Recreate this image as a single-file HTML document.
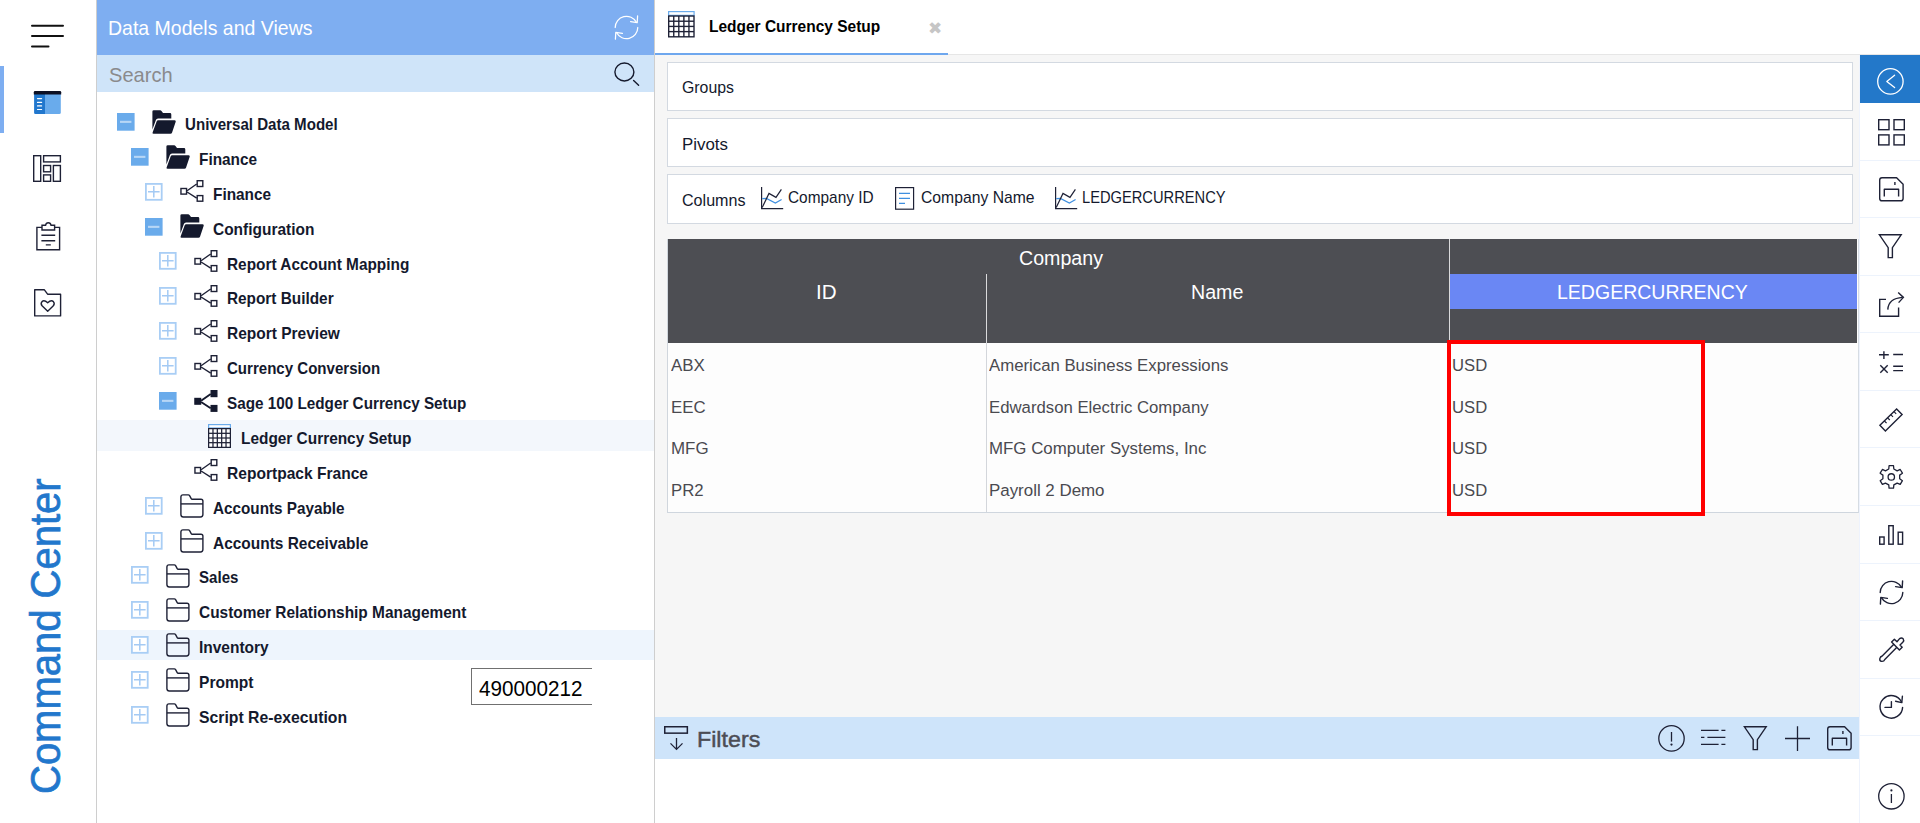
<!DOCTYPE html>
<html lang="en"><head><meta charset="utf-8"><title>Command Center - Ledger Currency Setup</title>
<style>
*{box-sizing:border-box}
html,body{margin:0;padding:0}
body{width:1920px;height:823px;overflow:hidden;background:#fff;position:relative;
 font-family:"Liberation Sans",sans-serif;color:#14192d}
.abs,.t,svg.i{position:absolute}
.t{white-space:nowrap;line-height:1;transform-origin:0 0;display:block}
.b{font-weight:bold}
svg.i{overflow:visible}
#rail{position:absolute;left:0;top:0;width:97px;height:823px;background:#fff;border-right:1px solid #cecece}
#panel{position:absolute;left:97px;top:0;width:558px;height:823px;background:#fff;border-right:1px solid #cecece}
#phead{position:absolute;left:0;top:0;width:557px;height:55px;background:#7eaef1}
#psearch{position:absolute;left:0;top:55px;width:557px;height:36.6px;background:#cfe4f9}
#tree{position:absolute;left:0;top:0;width:557px;height:823px;list-style:none;margin:0;padding:0}
#tree li{position:absolute;left:0;width:557px;margin:0;padding:0}
#tree li.sel{background:#f3f7fc}
#tree li.hov{background:#eef5fd}
#main{position:absolute;left:655px;top:0;width:1205px;height:823px;background:#fff}
#tabs{position:absolute;left:0;top:0;width:1265px;height:55px;background:#fff;border-bottom:1px solid #e6e6e6}
#tab{position:absolute;left:0;top:0;width:293px;height:55px;border-bottom:2px solid #6ea7ee}
#content{position:absolute;left:0;top:55px;width:1205px;height:662px;background:#f6f6f6}
.box{position:absolute;left:12px;width:1186px;height:49px;background:#fff;border:1px solid #d3d9e1}
#grid{position:absolute;left:12px;top:184px;width:1192px;height:274px;background:#fdfdfd;border-left:1px solid #d0d6dd;border-bottom:1px solid #cfd6de;border-right:1px solid #d6dce3}
#grid table{position:absolute;left:0;top:0;border-collapse:separate;border-spacing:0;table-layout:fixed;width:1189px}
#grid th,#grid td{padding:0;margin:0;font-weight:normal;position:relative;vertical-align:top;text-align:left}
#grid thead th{background:#4d4e53;color:#fff}
#filterbar{position:absolute;left:0;top:717px;width:1204px;height:41.8px;background:#cee4fa}
#tools{position:absolute;left:1859px;top:55px;width:61px;height:768px;background:#fff;border-left:1px solid #eef3fd;margin:0;padding:0;list-style:none}
#tools li{position:absolute;left:0;width:60px;height:57.5px;border-bottom:1px solid #edf3fc}
#tip{position:absolute;left:374px;top:668px;width:121px;height:37px;background:#fff;border:1px solid #707070;border-right:0}
#redbox{position:absolute;left:1447px;top:340px;width:258px;height:176px;border:4px solid #ff0000}
</style></head><body>
<nav id="rail">
<div class="abs" style="left:0;top:66px;width:4px;height:67px;background:#7eaef1"></div>
<svg class="i" style="left:28px;top:20px" width="40" height="32" viewBox="0 0 40 32" ><path fill="none" stroke="#111" stroke-width="2" stroke-linecap="round" d="M4,5.75H35M4,16H35M4,26.4H20.5"/></svg>
<svg class="i" style="left:34px;top:91px" width="27" height="23" viewBox="0 0 27 23" ><path fill="#69abec" d="M0.2,2H26.8V21.5Q26.8,23 25.3,23H1.7Q0.2,23 0.2,21.5Z"/><path fill="#2177cd" d="M0.2,2H11V23H1.7Q0.2,23 0.2,21.5Z"/><path fill="#0d1024" d="M-0.2,1.2Q-0.2,0.1 1,0.1H26Q27.2,0.1 27.2,1.2V3.5H-0.2Z"/><path fill="none" stroke="#fff" stroke-width="1.2" stroke-linecap="round" d="M3.5,7.6H7.6M3.5,11.4H7.6M3.5,14.9H7.6M3.5,18.5H7.6"/></svg>
<svg class="i" style="left:33.4px;top:155px" width="28.2" height="27" viewBox="0 0 28.2 27" ><g fill="none" stroke="#1e2136" stroke-width="1.4"><rect x="0.7" y="0.7" width="7" height="25.6"/><rect x="10.6" y="0.7" width="16.8" height="6.2"/><rect x="10.6" y="10.5" width="7" height="6.3"/><rect x="10.6" y="19.9" width="7" height="6.4"/><rect x="20.4" y="10.5" width="7" height="15.8"/></g></svg>
<svg class="i" style="left:35.5px;top:221.6px" width="24.5" height="28.6" viewBox="0 0 24.5 28.6" ><g fill="none" stroke="#1e2136" stroke-width="1.4"><path d="M6,5.4H0.9V27.8H23.6V5.4H18.6"/><path d="M6,8H18.6V3.2H15Q14.6,0.7 12.3,0.7Q10,0.7 9.6,3.2H6Z"/><path d="M5.4,13.2H19.2M5.4,18.8H19.2M9.8,22.9H14.8"/></g></svg>
<svg class="i" style="left:33.75px;top:289px" width="27.3" height="27.6" viewBox="0 0 27.3 27.6" ><g fill="none" stroke="#1e2136" stroke-width="1.4" stroke-linejoin="round"><path d="M0.7,0.7H10.2L13.6,5.2H26.6V26.9H0.7Z"/><path d="M13.7,22.3L8.3,17Q6.2,14.6 8,12.6Q10.3,10.6 13.7,13.8Q17.1,10.6 19.4,12.6Q21.2,14.6 19.1,17Z"/></g></svg>
<div class="t" style="left:60.3px;top:794.4px;font-size:41.8px;color:#2277cc;transform-origin:0 0;transform:rotate(-90deg) scale(0.9567,1) translateY(-35.00px);-webkit-text-stroke:0.7px #2277cc">Command Center</div>
</nav>
<aside id="panel">
<header id="phead">
<span class="t" style="left:11.2px;top:18.2px;font-size:20.8px;transform:scale(0.9375,1.0000);color:#fff;">Data Models and Views</span>
<svg class="i" style="left:517px;top:15.2px" width="25" height="25" viewBox="0 0 25 25" ><g fill="none" stroke="#fff" stroke-width="1.25" stroke-linecap="round" stroke-linejoin="round"><path d="M1.2,12.5A11.3,11.3 0 0 1 22.4,7.2"/><path d="M23.6,0.9L23.2,7.6L16.6,6.6"/><path d="M23.8,12.5A11.3,11.3 0 0 1 2.6,17.8"/><path d="M1.4,24.1L1.8,17.4L8.4,18.4"/></g></svg>
</header>
<div id="psearch">
<span class="t" style="left:12.4px;top:9.2px;font-size:21px;transform:scale(0.9558,1.0000);color:#8a8a8c;">Search</span>
<svg class="i" style="left:516.5px;top:6.5px" width="27" height="26" viewBox="0 0 27 26" ><g fill="none" stroke="#14192d" stroke-width="1.4" stroke-linecap="round"><ellipse cx="10.4" cy="10" rx="9.5" ry="9"/><path d="M19.6,18.6L24.6,23.3"/></g></svg>
</div>
<ul id="tree">
<li style="top:106px;height:31px"><svg class="i" style="left:20.1px;top:6.9px" width="18" height="18" viewBox="0 0 18 18" ><rect x="0" y="0" width="17.6" height="17.7" fill="#6aabeb"/><rect x="3" y="7.8" width="11.4" height="2.1" fill="#b7d6f6"/></svg><svg class="i" style="left:54.9px;top:3.7px" width="24" height="24" viewBox="0 0 24 24" ><path fill="#14192d" d="M0.4,1.6Q0.4,0.2 1.8,0.2L8.2,0.2Q9,0.2 9.5,0.9L10.6,2.6Q11,3.1 11.7,3.1L18,3.1Q19.3,3.1 19.3,4.4L19.3,8.4L6,8.4Q4.4,8.4 3.9,9.9L0.4,19.6Z"/><path fill="#14192d" d="M6.2,10.3L22.6,10.3Q24.2,10.3 23.7,11.8L20.1,22.6Q19.7,23.8 18.4,23.8L1.6,23.8Q0.1,23.8 0.6,22.4L4.6,11.5Q5,10.3 6.2,10.3Z"/></svg><span class="t b" style="left:87.55px;top:10px;font-size:16.5px;transform:scale(0.9150,1.0000);color:#14192d;">Universal Data Model</span></li>
<li style="top:141px;height:31px"><svg class="i" style="left:34.1px;top:6.78px" width="18" height="18" viewBox="0 0 18 18" ><rect x="0" y="0" width="17.6" height="17.7" fill="#6aabeb"/><rect x="3" y="7.8" width="11.4" height="2.1" fill="#b7d6f6"/></svg><svg class="i" style="left:68.9px;top:3.59px" width="24" height="24" viewBox="0 0 24 24" ><path fill="#14192d" d="M0.4,1.6Q0.4,0.2 1.8,0.2L8.2,0.2Q9,0.2 9.5,0.9L10.6,2.6Q11,3.1 11.7,3.1L18,3.1Q19.3,3.1 19.3,4.4L19.3,8.4L6,8.4Q4.4,8.4 3.9,9.9L0.4,19.6Z"/><path fill="#14192d" d="M6.2,10.3L22.6,10.3Q24.2,10.3 23.7,11.8L20.1,22.6Q19.7,23.8 18.4,23.8L1.6,23.8Q0.1,23.8 0.6,22.4L4.6,11.5Q5,10.3 6.2,10.3Z"/></svg><span class="t b" style="left:101.55px;top:10px;font-size:16.5px;transform:scale(0.9318,1.0000);color:#14192d;">Finance</span></li>
<li style="top:176px;height:31px"><svg class="i" style="left:48.1px;top:6.67px" width="18" height="18" viewBox="0 0 18 18" ><rect x="0.9" y="0.9" width="15.8" height="15.9" fill="#fff" stroke="#a9cef5" stroke-width="1.8"/><path fill="none" stroke="#a4caf4" stroke-width="1.5" d="M3,8.8H14.6M8.8,3V14.6"/></svg><svg class="i" style="left:82.6px;top:4.37px" width="24" height="22" viewBox="0 0 24 22" ><path fill="none" stroke="#1e2136" stroke-width="1.4" d="M7.1,10.7L16.7,4M7.1,12L16.7,18.2"/><rect x="0.95" y="8.5" width="5.6" height="5.6" fill="#fff" stroke="#1e2136" stroke-width="1.4"/><rect x="17.2" y="0.7" width="5.6" height="5.8" fill="#fff" stroke="#1e2136" stroke-width="1.4"/><rect x="17.2" y="15.6" width="5.6" height="5.6" fill="#fff" stroke="#1e2136" stroke-width="1.4"/></svg><span class="t b" style="left:115.55px;top:10px;font-size:16.5px;transform:scale(0.9318,1.0000);color:#14192d;">Finance</span></li>
<li style="top:211px;height:31px"><svg class="i" style="left:48.1px;top:6.56px" width="18" height="18" viewBox="0 0 18 18" ><rect x="0" y="0" width="17.6" height="17.7" fill="#6aabeb"/><rect x="3" y="7.8" width="11.4" height="2.1" fill="#b7d6f6"/></svg><svg class="i" style="left:82.9px;top:3.36px" width="24" height="24" viewBox="0 0 24 24" ><path fill="#14192d" d="M0.4,1.6Q0.4,0.2 1.8,0.2L8.2,0.2Q9,0.2 9.5,0.9L10.6,2.6Q11,3.1 11.7,3.1L18,3.1Q19.3,3.1 19.3,4.4L19.3,8.4L6,8.4Q4.4,8.4 3.9,9.9L0.4,19.6Z"/><path fill="#14192d" d="M6.2,10.3L22.6,10.3Q24.2,10.3 23.7,11.8L20.1,22.6Q19.7,23.8 18.4,23.8L1.6,23.8Q0.1,23.8 0.6,22.4L4.6,11.5Q5,10.3 6.2,10.3Z"/></svg><span class="t b" style="left:115.55px;top:10px;font-size:16.5px;transform:scale(0.9376,1.0000);color:#14192d;">Configuration</span></li>
<li style="top:246px;height:31px"><svg class="i" style="left:62.1px;top:6.44px" width="18" height="18" viewBox="0 0 18 18" ><rect x="0.9" y="0.9" width="15.8" height="15.9" fill="#fff" stroke="#a9cef5" stroke-width="1.8"/><path fill="none" stroke="#a4caf4" stroke-width="1.5" d="M3,8.8H14.6M8.8,3V14.6"/></svg><svg class="i" style="left:96.6px;top:4.14px" width="24" height="22" viewBox="0 0 24 22" ><path fill="none" stroke="#1e2136" stroke-width="1.4" d="M7.1,10.7L16.7,4M7.1,12L16.7,18.2"/><rect x="0.95" y="8.5" width="5.6" height="5.6" fill="#fff" stroke="#1e2136" stroke-width="1.4"/><rect x="17.2" y="0.7" width="5.6" height="5.8" fill="#fff" stroke="#1e2136" stroke-width="1.4"/><rect x="17.2" y="15.6" width="5.6" height="5.6" fill="#fff" stroke="#1e2136" stroke-width="1.4"/></svg><span class="t b" style="left:129.55px;top:10px;font-size:16.5px;transform:scale(0.9323,1.0000);color:#14192d;">Report Account Mapping</span></li>
<li style="top:281px;height:31px"><svg class="i" style="left:62.1px;top:6.32px" width="18" height="18" viewBox="0 0 18 18" ><rect x="0.9" y="0.9" width="15.8" height="15.9" fill="#fff" stroke="#a9cef5" stroke-width="1.8"/><path fill="none" stroke="#a4caf4" stroke-width="1.5" d="M3,8.8H14.6M8.8,3V14.6"/></svg><svg class="i" style="left:96.6px;top:4.02px" width="24" height="22" viewBox="0 0 24 22" ><path fill="none" stroke="#1e2136" stroke-width="1.4" d="M7.1,10.7L16.7,4M7.1,12L16.7,18.2"/><rect x="0.95" y="8.5" width="5.6" height="5.6" fill="#fff" stroke="#1e2136" stroke-width="1.4"/><rect x="17.2" y="0.7" width="5.6" height="5.8" fill="#fff" stroke="#1e2136" stroke-width="1.4"/><rect x="17.2" y="15.6" width="5.6" height="5.6" fill="#fff" stroke="#1e2136" stroke-width="1.4"/></svg><span class="t b" style="left:129.55px;top:9px;font-size:16.5px;transform:scale(0.9303,1.0000);color:#14192d;">Report Builder</span></li>
<li style="top:316px;height:31px"><svg class="i" style="left:62.1px;top:6.21px" width="18" height="18" viewBox="0 0 18 18" ><rect x="0.9" y="0.9" width="15.8" height="15.9" fill="#fff" stroke="#a9cef5" stroke-width="1.8"/><path fill="none" stroke="#a4caf4" stroke-width="1.5" d="M3,8.8H14.6M8.8,3V14.6"/></svg><svg class="i" style="left:96.6px;top:3.91px" width="24" height="22" viewBox="0 0 24 22" ><path fill="none" stroke="#1e2136" stroke-width="1.4" d="M7.1,10.7L16.7,4M7.1,12L16.7,18.2"/><rect x="0.95" y="8.5" width="5.6" height="5.6" fill="#fff" stroke="#1e2136" stroke-width="1.4"/><rect x="17.2" y="0.7" width="5.6" height="5.8" fill="#fff" stroke="#1e2136" stroke-width="1.4"/><rect x="17.2" y="15.6" width="5.6" height="5.6" fill="#fff" stroke="#1e2136" stroke-width="1.4"/></svg><span class="t b" style="left:129.55px;top:9px;font-size:16.5px;transform:scale(0.9390,1.0000);color:#14192d;">Report Preview</span></li>
<li style="top:351px;height:31px"><svg class="i" style="left:62.1px;top:6.1px" width="18" height="18" viewBox="0 0 18 18" ><rect x="0.9" y="0.9" width="15.8" height="15.9" fill="#fff" stroke="#a9cef5" stroke-width="1.8"/><path fill="none" stroke="#a4caf4" stroke-width="1.5" d="M3,8.8H14.6M8.8,3V14.6"/></svg><svg class="i" style="left:96.6px;top:3.8px" width="24" height="22" viewBox="0 0 24 22" ><path fill="none" stroke="#1e2136" stroke-width="1.4" d="M7.1,10.7L16.7,4M7.1,12L16.7,18.2"/><rect x="0.95" y="8.5" width="5.6" height="5.6" fill="#fff" stroke="#1e2136" stroke-width="1.4"/><rect x="17.2" y="0.7" width="5.6" height="5.8" fill="#fff" stroke="#1e2136" stroke-width="1.4"/><rect x="17.2" y="15.6" width="5.6" height="5.6" fill="#fff" stroke="#1e2136" stroke-width="1.4"/></svg><span class="t b" style="left:129.55px;top:9px;font-size:16.5px;transform:scale(0.9124,1.0000);color:#14192d;">Currency Conversion</span></li>
<li style="top:386px;height:31px"><svg class="i" style="left:62.1px;top:5.98px" width="18" height="18" viewBox="0 0 18 18" ><rect x="0" y="0" width="17.6" height="17.7" fill="#6aabeb"/><rect x="3" y="7.8" width="11.4" height="2.1" fill="#b7d6f6"/></svg><svg class="i" style="left:96.6px;top:3.78px" width="24" height="22" viewBox="0 0 24 22" ><path fill="none" stroke="#14192d" stroke-width="1.9" d="M7.1,10.7L16.7,4M7.1,12L16.7,18.2"/><rect x="0.95" y="8.5" width="5.6" height="5.6" fill="#14192d" stroke="#14192d" stroke-width="1.4"/><rect x="17.2" y="0.7" width="5.6" height="5.8" fill="#14192d" stroke="#14192d" stroke-width="1.4"/><rect x="17.2" y="15.6" width="5.6" height="5.6" fill="#14192d" stroke="#14192d" stroke-width="1.4"/></svg><span class="t b" style="left:129.55px;top:9px;font-size:16.5px;transform:scale(0.9254,1.0000);color:#14192d;">Sage 100 Ledger Currency Setup</span></li>
<li style="top:420px;height:31px" class="sel"><svg class="i" style="left:111.1px;top:4.06px" width="23" height="24" viewBox="0 0 23 24" ><rect x="0.6" y="0.6" width="21.8" height="3.4" fill="#fff" stroke="#6aabeb" stroke-width="1.2"/><rect x="0" y="4" width="23" height="20" fill="#1e2136"/><rect x="1.25" y="5.25" width="3.1" height="3.44" fill="#fff"/><rect x="5.6" y="5.25" width="3.1" height="3.44" fill="#fff"/><rect x="9.95" y="5.25" width="3.1" height="3.44" fill="#fff"/><rect x="14.3" y="5.25" width="3.1" height="3.44" fill="#fff"/><rect x="18.65" y="5.25" width="3.1" height="3.44" fill="#fff"/><rect x="1.25" y="9.94" width="3.1" height="3.44" fill="#fff"/><rect x="5.6" y="9.94" width="3.1" height="3.44" fill="#fff"/><rect x="9.95" y="9.94" width="3.1" height="3.44" fill="#fff"/><rect x="14.3" y="9.94" width="3.1" height="3.44" fill="#fff"/><rect x="18.65" y="9.94" width="3.1" height="3.44" fill="#fff"/><rect x="1.25" y="14.62" width="3.1" height="3.44" fill="#fff"/><rect x="5.6" y="14.62" width="3.1" height="3.44" fill="#fff"/><rect x="9.95" y="14.62" width="3.1" height="3.44" fill="#fff"/><rect x="14.3" y="14.62" width="3.1" height="3.44" fill="#fff"/><rect x="18.65" y="14.62" width="3.1" height="3.44" fill="#fff"/><rect x="1.25" y="19.31" width="3.1" height="3.44" fill="#fff"/><rect x="5.6" y="19.31" width="3.1" height="3.44" fill="#fff"/><rect x="9.95" y="19.31" width="3.1" height="3.44" fill="#fff"/><rect x="14.3" y="19.31" width="3.1" height="3.44" fill="#fff"/><rect x="18.65" y="19.31" width="3.1" height="3.44" fill="#fff"/></svg><span class="t b" style="left:143.55px;top:10px;font-size:16.5px;transform:scale(0.9333,1.0000);color:#14192d;">Ledger Currency Setup</span></li>
<li style="top:455px;height:31px"><svg class="i" style="left:96.6px;top:4.45px" width="24" height="22" viewBox="0 0 24 22" ><path fill="none" stroke="#1e2136" stroke-width="1.4" d="M7.1,10.7L16.7,4M7.1,12L16.7,18.2"/><rect x="0.95" y="8.5" width="5.6" height="5.6" fill="#fff" stroke="#1e2136" stroke-width="1.4"/><rect x="17.2" y="0.7" width="5.6" height="5.8" fill="#fff" stroke="#1e2136" stroke-width="1.4"/><rect x="17.2" y="15.6" width="5.6" height="5.6" fill="#fff" stroke="#1e2136" stroke-width="1.4"/></svg><span class="t b" style="left:129.55px;top:10px;font-size:16.5px;transform:scale(0.9433,1.0000);color:#14192d;">Reportpack France</span></li>
<li style="top:490px;height:31px"><svg class="i" style="left:48.1px;top:6.63px" width="18" height="18" viewBox="0 0 18 18" ><rect x="0.9" y="0.9" width="15.8" height="15.9" fill="#fff" stroke="#a9cef5" stroke-width="1.8"/><path fill="none" stroke="#a4caf4" stroke-width="1.5" d="M3,8.8H14.6M8.8,3V14.6"/></svg><svg class="i" style="left:83px;top:3.74px" width="24" height="24" viewBox="0 0 24 24" ><path fill="none" stroke="#1e2136" stroke-width="1.4" stroke-linejoin="round" d="M0.9,3Q0.9,0.9 3,0.9L8.4,0.9Q9.1,0.9 9.6,1.7L11.2,4.6Q11.5,5.2 12.3,5.2L21,5.2Q22.9,5.2 22.9,7.1L22.9,20.6Q22.9,23 20.5,23L3.3,23Q0.9,23 0.9,20.6Z"/><path fill="none" stroke="#1e2136" stroke-width="1.4" d="M0.9,9.9L22.9,9.9"/></svg><span class="t b" style="left:115.55px;top:10px;font-size:16.5px;transform:scale(0.9258,1.0000);color:#14192d;">Accounts Payable</span></li>
<li style="top:525px;height:31px"><svg class="i" style="left:48.1px;top:6.52px" width="18" height="18" viewBox="0 0 18 18" ><rect x="0.9" y="0.9" width="15.8" height="15.9" fill="#fff" stroke="#a9cef5" stroke-width="1.8"/><path fill="none" stroke="#a4caf4" stroke-width="1.5" d="M3,8.8H14.6M8.8,3V14.6"/></svg><svg class="i" style="left:83px;top:3.62px" width="24" height="24" viewBox="0 0 24 24" ><path fill="none" stroke="#1e2136" stroke-width="1.4" stroke-linejoin="round" d="M0.9,3Q0.9,0.9 3,0.9L8.4,0.9Q9.1,0.9 9.6,1.7L11.2,4.6Q11.5,5.2 12.3,5.2L21,5.2Q22.9,5.2 22.9,7.1L22.9,20.6Q22.9,23 20.5,23L3.3,23Q0.9,23 0.9,20.6Z"/><path fill="none" stroke="#1e2136" stroke-width="1.4" d="M0.9,9.9L22.9,9.9"/></svg><span class="t b" style="left:115.55px;top:10px;font-size:16.5px;transform:scale(0.9362,1.0000);color:#14192d;">Accounts Receivable</span></li>
<li style="top:560px;height:31px"><svg class="i" style="left:34.1px;top:6.4px" width="18" height="18" viewBox="0 0 18 18" ><rect x="0.9" y="0.9" width="15.8" height="15.9" fill="#fff" stroke="#a9cef5" stroke-width="1.8"/><path fill="none" stroke="#a4caf4" stroke-width="1.5" d="M3,8.8H14.6M8.8,3V14.6"/></svg><svg class="i" style="left:69px;top:3.5px" width="24" height="24" viewBox="0 0 24 24" ><path fill="none" stroke="#1e2136" stroke-width="1.4" stroke-linejoin="round" d="M0.9,3Q0.9,0.9 3,0.9L8.4,0.9Q9.1,0.9 9.6,1.7L11.2,4.6Q11.5,5.2 12.3,5.2L21,5.2Q22.9,5.2 22.9,7.1L22.9,20.6Q22.9,23 20.5,23L3.3,23Q0.9,23 0.9,20.6Z"/><path fill="none" stroke="#1e2136" stroke-width="1.4" d="M0.9,9.9L22.9,9.9"/></svg><span class="t b" style="left:101.55px;top:9px;font-size:16.5px;transform:scale(0.9137,1.0000);color:#14192d;">Sales</span></li>
<li style="top:595px;height:31px"><svg class="i" style="left:34.1px;top:6.29px" width="18" height="18" viewBox="0 0 18 18" ><rect x="0.9" y="0.9" width="15.8" height="15.9" fill="#fff" stroke="#a9cef5" stroke-width="1.8"/><path fill="none" stroke="#a4caf4" stroke-width="1.5" d="M3,8.8H14.6M8.8,3V14.6"/></svg><svg class="i" style="left:69px;top:3.39px" width="24" height="24" viewBox="0 0 24 24" ><path fill="none" stroke="#1e2136" stroke-width="1.4" stroke-linejoin="round" d="M0.9,3Q0.9,0.9 3,0.9L8.4,0.9Q9.1,0.9 9.6,1.7L11.2,4.6Q11.5,5.2 12.3,5.2L21,5.2Q22.9,5.2 22.9,7.1L22.9,20.6Q22.9,23 20.5,23L3.3,23Q0.9,23 0.9,20.6Z"/><path fill="none" stroke="#1e2136" stroke-width="1.4" d="M0.9,9.9L22.9,9.9"/></svg><span class="t b" style="left:101.55px;top:9px;font-size:16.5px;transform:scale(0.9345,1.0000);color:#14192d;">Customer Relationship Management</span></li>
<li style="top:630px;height:30px" class="hov"><svg class="i" style="left:34.1px;top:6.17px" width="18" height="18" viewBox="0 0 18 18" ><rect x="0.9" y="0.9" width="15.8" height="15.9" fill="#fff" stroke="#a9cef5" stroke-width="1.8"/><path fill="none" stroke="#a4caf4" stroke-width="1.5" d="M3,8.8H14.6M8.8,3V14.6"/></svg><svg class="i" style="left:69px;top:3.27px" width="24" height="24" viewBox="0 0 24 24" ><path fill="none" stroke="#1e2136" stroke-width="1.4" stroke-linejoin="round" d="M0.9,3Q0.9,0.9 3,0.9L8.4,0.9Q9.1,0.9 9.6,1.7L11.2,4.6Q11.5,5.2 12.3,5.2L21,5.2Q22.9,5.2 22.9,7.1L22.9,20.6Q22.9,23 20.5,23L3.3,23Q0.9,23 0.9,20.6Z"/><path fill="none" stroke="#1e2136" stroke-width="1.4" d="M0.9,9.9L22.9,9.9"/></svg><span class="t b" style="left:101.55px;top:9px;font-size:16.5px;transform:scale(0.9385,1.0000);color:#14192d;">Inventory</span></li>
<li style="top:665px;height:31px"><svg class="i" style="left:34.1px;top:6.06px" width="18" height="18" viewBox="0 0 18 18" ><rect x="0.9" y="0.9" width="15.8" height="15.9" fill="#fff" stroke="#a9cef5" stroke-width="1.8"/><path fill="none" stroke="#a4caf4" stroke-width="1.5" d="M3,8.8H14.6M8.8,3V14.6"/></svg><svg class="i" style="left:69px;top:3.16px" width="24" height="24" viewBox="0 0 24 24" ><path fill="none" stroke="#1e2136" stroke-width="1.4" stroke-linejoin="round" d="M0.9,3Q0.9,0.9 3,0.9L8.4,0.9Q9.1,0.9 9.6,1.7L11.2,4.6Q11.5,5.2 12.3,5.2L21,5.2Q22.9,5.2 22.9,7.1L22.9,20.6Q22.9,23 20.5,23L3.3,23Q0.9,23 0.9,20.6Z"/><path fill="none" stroke="#1e2136" stroke-width="1.4" d="M0.9,9.9L22.9,9.9"/></svg><span class="t b" style="left:101.55px;top:9px;font-size:16.5px;transform:scale(0.9437,1.0000);color:#14192d;">Prompt</span></li>
<li style="top:700px;height:31px"><svg class="i" style="left:34.1px;top:5.94px" width="18" height="18" viewBox="0 0 18 18" ><rect x="0.9" y="0.9" width="15.8" height="15.9" fill="#fff" stroke="#a9cef5" stroke-width="1.8"/><path fill="none" stroke="#a4caf4" stroke-width="1.5" d="M3,8.8H14.6M8.8,3V14.6"/></svg><svg class="i" style="left:69px;top:3.04px" width="24" height="24" viewBox="0 0 24 24" ><path fill="none" stroke="#1e2136" stroke-width="1.4" stroke-linejoin="round" d="M0.9,3Q0.9,0.9 3,0.9L8.4,0.9Q9.1,0.9 9.6,1.7L11.2,4.6Q11.5,5.2 12.3,5.2L21,5.2Q22.9,5.2 22.9,7.1L22.9,20.6Q22.9,23 20.5,23L3.3,23Q0.9,23 0.9,20.6Z"/><path fill="none" stroke="#1e2136" stroke-width="1.4" d="M0.9,9.9L22.9,9.9"/></svg><span class="t b" style="left:101.55px;top:9px;font-size:16.5px;transform:scale(0.9557,1.0000);color:#14192d;">Script Re-execution</span></li>
</ul>
<div id="tip"><span class="t" style="left:7.2px;top:8.9px;font-size:21.6px;transform:scale(0.9573,1.0000);color:#000;">490000212</span></div>
</aside>
<main id="main">
<div id="tabs"><div id="tab">
<svg class="i" style="left:13.1px;top:11.3px" width="26.7" height="26.5" viewBox="0 0 26.7 26.5" ><rect x="0.6" y="0.6" width="25.5" height="3.74" fill="#fff" stroke="#6aabeb" stroke-width="1.2"/><rect x="0" y="4.34" width="26.7" height="22.16" fill="#1e2136"/><rect x="1.38" y="5.71" width="3.69" height="3.82" fill="#fff"/><rect x="6.44" y="5.71" width="3.69" height="3.82" fill="#fff"/><rect x="11.5" y="5.71" width="3.69" height="3.82" fill="#fff"/><rect x="16.57" y="5.71" width="3.69" height="3.82" fill="#fff"/><rect x="21.63" y="5.71" width="3.69" height="3.82" fill="#fff"/><rect x="1.38" y="10.91" width="3.69" height="3.82" fill="#fff"/><rect x="6.44" y="10.91" width="3.69" height="3.82" fill="#fff"/><rect x="11.5" y="10.91" width="3.69" height="3.82" fill="#fff"/><rect x="16.57" y="10.91" width="3.69" height="3.82" fill="#fff"/><rect x="21.63" y="10.91" width="3.69" height="3.82" fill="#fff"/><rect x="1.38" y="16.11" width="3.69" height="3.82" fill="#fff"/><rect x="6.44" y="16.11" width="3.69" height="3.82" fill="#fff"/><rect x="11.5" y="16.11" width="3.69" height="3.82" fill="#fff"/><rect x="16.57" y="16.11" width="3.69" height="3.82" fill="#fff"/><rect x="21.63" y="16.11" width="3.69" height="3.82" fill="#fff"/><rect x="1.38" y="21.3" width="3.69" height="3.82" fill="#fff"/><rect x="6.44" y="21.3" width="3.69" height="3.82" fill="#fff"/><rect x="11.5" y="21.3" width="3.69" height="3.82" fill="#fff"/><rect x="16.57" y="21.3" width="3.69" height="3.82" fill="#fff"/><rect x="21.63" y="21.3" width="3.69" height="3.82" fill="#fff"/></svg>
<span class="t b" style="left:53.9px;top:17.7px;font-size:16.5px;transform:scale(0.9383,1.0000);color:#000;">Ledger Currency Setup</span>
<span class="t" style="left:272.5px;top:19.6px;font-size:17px;color:#c6c6c6;font-family:"DejaVu Sans",sans-serif;">✖</span>
</div></div>
<section id="content">
<div class="box" style="top:7px"><span class="t" style="left:13.85px;top:16.6px;font-size:16.6px;transform:scale(0.9552,1.0000);color:#14192d;">Groups</span></div>
<div class="box" style="top:63px"><span class="t" style="left:13.85px;top:18.2px;font-size:16.6px;transform:scale(1.0176,1.0000);color:#14192d;">Pivots</span></div>
<div class="box" style="top:119px;height:50px"><span class="t" style="left:14px;top:18px;font-size:16.6px;transform:scale(0.9694,1.0000);color:#14192d;">Columns</span><svg class="i" style="left:93px;top:11.8px" width="22.4" height="22.4" viewBox="0 0 22.4 22.4" ><g fill="none" stroke-width="1.2"><path stroke="#1e2136" d="M0.6,0V21.6H22.2"/><path stroke="#3f8fe0" d="M1.2,11.6L5.4,11.4L14.4,16L20.6,12.6"/><path stroke="#1e2136" d="M1.2,20.6L8,6.4L15,10.4L20.4,2.4"/></g></svg><span class="t" style="left:119.6px;top:14.8px;font-size:16.6px;transform:scale(0.9278,1.0000);color:#14192d;">Company ID</span><svg class="i" style="left:227px;top:12.1px" width="19.2" height="22.8" viewBox="0 0 19.2 22.8" ><rect x="0.6" y="0.6" width="18" height="21.6" fill="#fff" stroke="#1e2136" stroke-width="1.2"/><path fill="none" stroke="#3f8fe0" stroke-width="1.2" d="M4,6.4H15M4,11.4H15M4,16.4H10"/></svg><span class="t" style="left:252.7px;top:14.8px;font-size:16.6px;transform:scale(0.9471,1.0000);color:#14192d;">Company Name</span><svg class="i" style="left:387px;top:11.8px" width="22.4" height="22.4" viewBox="0 0 22.4 22.4" ><g fill="none" stroke-width="1.2"><path stroke="#1e2136" d="M0.6,0V21.6H22.2"/><path stroke="#3f8fe0" d="M1.2,11.6L5.4,11.4L14.4,16L20.6,12.6"/><path stroke="#1e2136" d="M1.2,20.6L8,6.4L15,10.4L20.4,2.4"/></g></svg><span class="t" style="left:413.9px;top:14.8px;font-size:16.6px;transform:scale(0.8846,1.0000);color:#14192d;">LEDGERCURRENCY</span></div>
<div id="grid"><table>
<colgroup><col style="width:318px"><col style="width:463px"><col style="width:408px"></colgroup>
<thead>
<tr style="height:35px"><th colspan="2"><span class="t" style="left:351.1px;top:7.95px;font-size:20px;transform:scale(0.9813,1.0500);color:#fff;">Company</span></th><th style="border-left:1px solid #dadadc;"></th></tr>
<tr style="height:35px"><th><span class="t" style="left:147.6px;top:7.15px;font-size:20px;transform:scale(1.0300,1.0500);color:#fff;">ID</span></th><th style="border-left:1px solid #dadadc;"><span class="t" style="left:203.7px;top:7.15px;font-size:20px;transform:scale(0.9822,1.0500);color:#fff;">Name</span></th><th style="border-left:1px solid #dadadc;background:#6a87f4"><span class="t" style="left:106.8px;top:7.15px;font-size:20px;transform:scale(0.9755,1.0500);color:#fff;">LEDGERCURRENCY</span></th></tr>
<tr style="height:34px"><th></th><th style="border-left:1px solid #dadadc;"></th><th style="border-left:1px solid #dadadc;"></th></tr>
</thead><tbody>
<tr style="height:42px"><td><span class="t" style="left:3.2px;top:14.74px;font-size:16.67px;transform:scale(1.0162,1.0200);color:#4a4a50;">ABX</span></td><td style="border-left:1px solid #d3d6db;"><span class="t" style="left:2px;top:14.74px;font-size:16.67px;transform:scale(1.0062,1.0200);color:#4a4a50;">American Business Expressions</span></td><td style="border-left:1px solid #d3d6db;"><span class="t" style="left:2px;top:14.74px;font-size:16.67px;transform:scale(1.0001,1.0200);color:#4a4a50;">USD</span></td></tr>
<tr style="height:42px"><td><span class="t" style="left:3.2px;top:14.84px;font-size:16.67px;transform:scale(1.0094,1.0200);color:#4a4a50;">EEC</span></td><td style="border-left:1px solid #d3d6db;"><span class="t" style="left:2px;top:14.84px;font-size:16.67px;transform:scale(1.0052,1.0200);color:#4a4a50;">Edwardson Electric Company</span></td><td style="border-left:1px solid #d3d6db;"><span class="t" style="left:2px;top:14.84px;font-size:16.67px;transform:scale(1.0001,1.0200);color:#4a4a50;">USD</span></td></tr>
<tr style="height:42px"><td><span class="t" style="left:3.2px;top:13.94px;font-size:16.67px;transform:scale(1.0152,1.0200);color:#4a4a50;">MFG</span></td><td style="border-left:1px solid #d3d6db;"><span class="t" style="left:2px;top:13.94px;font-size:16.67px;transform:scale(1.0125,1.0200);color:#4a4a50;">MFG Computer Systems, Inc</span></td><td style="border-left:1px solid #d3d6db;"><span class="t" style="left:2px;top:13.94px;font-size:16.67px;transform:scale(1.0001,1.0200);color:#4a4a50;">USD</span></td></tr>
<tr style="height:43px"><td><span class="t" style="left:3.2px;top:13.74px;font-size:16.67px;transform:scale(1.0053,1.0200);color:#4a4a50;">PR2</span></td><td style="border-left:1px solid #d3d6db;"><span class="t" style="left:2px;top:13.74px;font-size:16.67px;transform:scale(1.0144,1.0200);color:#4a4a50;">Payroll 2 Demo</span></td><td style="border-left:1px solid #d3d6db;"><span class="t" style="left:2px;top:13.74px;font-size:16.67px;transform:scale(1.0001,1.0200);color:#4a4a50;">USD</span></td></tr>
</tbody></table></div>
</section>
<footer id="filterbar">
<svg class="i" style="left:9px;top:9px" width="25" height="25" viewBox="0 0 25 25" ><g fill="none" stroke="#1e2136" stroke-width="1.5"><rect x="0.75" y="0.75" width="22.6" height="6.4"/><path stroke-width="1.3" d="M12.5,12V23.2M6.5,17.4L12.5,23.4L18.5,17.4"/></g></svg>
<span class="t" style="left:41.6px;top:12.6px;font-size:21.5px;transform:scale(1.0815,1.0000);color:#4c4d55;-webkit-text-stroke:0.45px #4c4d55;">Filters</span>
<svg class="i" style="left:1003px;top:8px" width="27" height="27" viewBox="0 0 27 27" ><g fill="none" stroke="#1e2136" stroke-width="1.3"><circle cx="13.5" cy="13.4" r="12.7"/><path d="M13.5,7V16.6"/></g><circle cx="13.5" cy="19.6" r="1.1" fill="#1e2136"/></svg>
<svg class="i" style="left:1045.9px;top:12px" width="25" height="17" viewBox="0 0 25 17" ><path fill="none" stroke="#1e2136" stroke-width="1.3" d="M0,1.4H17.6M20.4,1.4H24.4M0,8.4H3.4M6.4,8.4H24.4M0,15.4H17.6M20.4,15.4H24.4"/></svg>
<svg class="i" style="left:1087.75px;top:8.6px" width="24.6" height="24.4" viewBox="0 0 24.6 24.4" ><path fill="none" stroke="#1e2136" stroke-width="1.4" stroke-linejoin="miter" d="M1.4,0.8H23.2L14.4,13.6V23.6H10.2V13.6Z"/></svg>
<svg class="i" style="left:1130px;top:9px" width="25" height="25" viewBox="0 0 25 25" ><path fill="none" stroke="#1e2136" stroke-width="1.3" d="M0,12.5H25M12.5,0.2V25"/></svg>
<svg class="i" style="left:1172.1px;top:9.1px" width="24.8" height="24.5" viewBox="0 0 24.8 24.5" ><g fill="none" stroke="#1e2136" stroke-width="1.4" stroke-linejoin="round"><path d="M3,0.7H17.6L24.1,7.2V21.4Q24.1,23.8 21.7,23.8H3Q0.7,23.8 0.7,21.4V3Q0.7,0.7 3,0.7Z"/><path d="M5.3,19.4V12.2H19.6V19.4"/><path d="M15.9,5V8"/></g></svg>
</footer>
</main>
<ul id="tools">
<li style="top:0;height:48px;background:#2378c9;border-bottom:0"><svg class="i" style="left:17px;top:12.6px" width="27" height="27" viewBox="0 0 27 27" ><g fill="none" stroke="#fff" stroke-width="1.3" stroke-linecap="round" stroke-linejoin="round"><circle cx="13.4" cy="13.4" r="12.7"/><path d="M17.6,7.2L9.8,13.4L17.6,19.6"/></g></svg></li>
<li style="top:48px;height:58px">
<svg class="i" style="left:18px;top:16.2px" width="27" height="26.6" viewBox="0 0 27 26.6" ><g fill="none" stroke="#1e2136" stroke-width="1.4"><rect x="0.7" y="0.7" width="10.3" height="10"/><rect x="16" y="0.7" width="10.3" height="10"/><rect x="0.7" y="15.9" width="10.3" height="10"/><rect x="16" y="15.9" width="10.3" height="10"/></g></svg>
</li>
<li style="top:106px;height:57px">
<svg class="i" style="left:19px;top:16.1px" width="24.8" height="24.5" viewBox="0 0 24.8 24.5" ><g fill="none" stroke="#1e2136" stroke-width="1.4" stroke-linejoin="round"><path d="M3,0.7H17.6L24.1,7.2V21.4Q24.1,23.8 21.7,23.8H3Q0.7,23.8 0.7,21.4V3Q0.7,0.7 3,0.7Z"/><path d="M5.3,19.4V12.2H19.6V19.4"/><path d="M15.9,5V8"/></g></svg>
</li>
<li style="top:163px;height:58px">
<svg class="i" style="left:18.1px;top:16.2px" width="24.6" height="24.4" viewBox="0 0 24.6 24.4" ><path fill="none" stroke="#1e2136" stroke-width="1.4" stroke-linejoin="miter" d="M1.4,0.8H23.2L14.4,13.6V23.6H10.2V13.6Z"/></svg>
</li>
<li style="top:221px;height:57px">
<svg class="i" style="left:19px;top:16px" width="25.4" height="25" viewBox="0 0 25.4 25" ><g fill="none" stroke="#1e2136" stroke-width="1.4" stroke-linejoin="miter"><path d="M7,7.4H0.7V24.3H19.6V15.6"/><path d="M8.8,17.6Q9.4,6.4 23.6,5.4"/><path d="M19.2,0.6L24.4,5.4L19.6,10.6"/></g></svg>
</li>
<li style="top:278px;height:58px">
<svg class="i" style="left:19px;top:18.4px" width="24.4" height="22" viewBox="0 0 24.4 22" ><g fill="none" stroke="#1e2136" stroke-width="1.4"><path d="M0,3.7H9.8M4.9,0.3V7.9M14.2,3.5H24M1.3,14.3L8.7,21.7M8.7,14.3L1.3,21.7M14.2,15.3H24M14.2,19.6H24"/></g></svg>
</li>
<li style="top:336px;height:57px">
<svg class="i" style="left:19.4px;top:17px" width="24" height="24" viewBox="0 0 24 24" ><g fill="none" stroke="#1e2136" stroke-width="1.4" stroke-linejoin="miter"><path d="M0.9,17.2L17.6,0.9L23.1,6.6L6.4,22.9Z"/><path stroke-width="1.2" d="M5.4,13L7.6,15.2M8.6,9.8L10.8,12M11.8,6.6L14,8.8M15,3.6L17.2,5.8"/></g></svg>
</li>
<li style="top:393px;height:58px">
<svg class="i" style="left:19px;top:17px" width="24.6" height="24.6" viewBox="0 0 24.6 24.6" ><g fill="none" stroke="#1e2136" stroke-width="1.3" stroke-linejoin="round"><path d="M9.76,3.98L10.07,0.71L14.53,0.71L14.84,3.98L18.14,5.83L21.22,4.46L23.45,8.2L20.69,10.1L20.69,13.8L23.45,15.7L21.22,19.44L18.14,18.07L14.84,19.92L14.53,23.19L10.07,23.19L9.76,19.92L6.46,18.07L3.38,19.44L1.15,15.7L3.91,13.8L3.91,10.1L1.15,8.2L3.38,4.46L6.46,5.83Z"/><circle cx="12.3" cy="11.95" r="3.2"/></g></svg>
</li>
<li style="top:451px;height:58px">
<svg class="i" style="left:19px;top:19px" width="24.4" height="20" viewBox="0 0 24.4 20" ><g fill="none" stroke="#1e2136" stroke-width="1.4"><rect x="0.7" y="12" width="4.4" height="7.2"/><rect x="9.8" y="0.7" width="4.4" height="18.5"/><rect x="19.2" y="7.2" width="4.4" height="12"/></g></svg>
</li>
<li style="top:509px;height:57px">
<svg class="i" style="left:19px;top:16px" width="25" height="25" viewBox="0 0 25 25" ><g fill="none" stroke="#1e2136" stroke-width="1.4" stroke-linecap="round" stroke-linejoin="round"><path d="M1.2,12.5A11.3,11.3 0 0 1 22.4,7.2"/><path d="M23.6,0.9L23.2,7.6L16.6,6.6"/><path d="M23.8,12.5A11.3,11.3 0 0 1 2.6,17.8"/><path d="M1.4,24.1L1.8,17.4L8.4,18.4"/></g></svg>
</li>
<li style="top:566px;height:58px">
<svg class="i" style="left:18.6px;top:16px" width="25.4" height="25.4" viewBox="0 0 25.4 25.4" ><g fill="none" stroke="#1e2136" stroke-width="1.4" stroke-linejoin="round" stroke-linecap="round"><path d="M14.6,7.6L3.2,19Q1.4,19.6 0.8,21.6Q0.4,24 2.6,24.4Q5,24.6 5.8,22.4L17.4,10.8"/><path d="M12.6,5L15.4,2.2L18,4.8L20.6,1.6Q22.6,0.2 24.2,1.8Q25.4,3.4 23.8,5.2L21,8L23.2,10.2L20.4,13Z"/></g></svg>
</li>
<li style="top:624px;height:57px">
<svg class="i" style="left:18.6px;top:16.2px" width="25" height="24.4" viewBox="0 0 25 24.4" ><g fill="none" stroke="#1e2136" stroke-width="1.4" stroke-linecap="round" stroke-linejoin="round"><path d="M22.6,7.2A11.3,11.3 0 1 0 23.6,12.4"/><path d="M23.4,1.2L22.8,7.6L16.6,6.2"/><path d="M12.4,6.6V12.4H6"/></g></svg>
</li>
<li style="top:681px;height:87px;border-bottom:0"><svg class="i" style="left:18.2px;top:47.2px" width="27" height="27" viewBox="0 0 27 27" ><g fill="none" stroke="#1e2136" stroke-width="1.3"><circle cx="13.4" cy="13.3" r="12.7"/><path d="M13.4,11V20"/></g><circle cx="13.4" cy="7.4" r="1.1" fill="#1e2136"/></svg></li>
</ul>
<div id="redbox"></div>
</body></html>
